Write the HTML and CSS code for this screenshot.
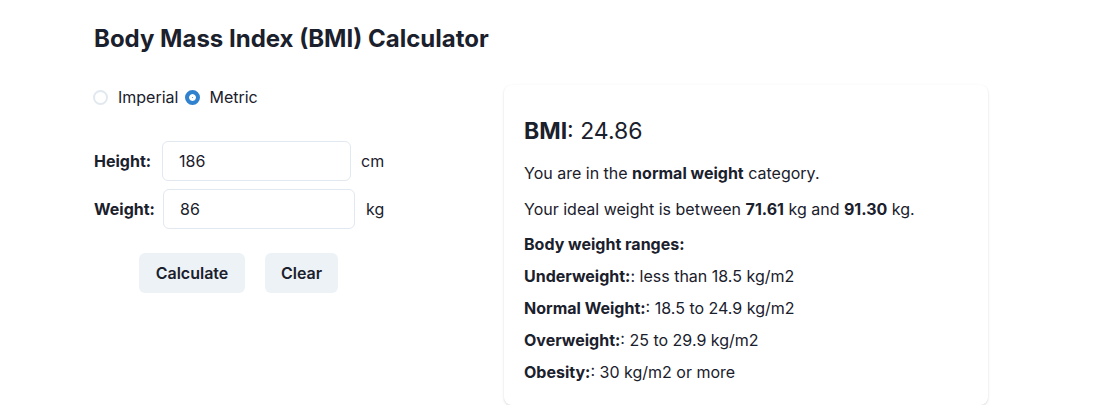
FILE: index.html
```html
<!DOCTYPE html>
<html lang="en">
<head>
<meta charset="utf-8">
<title>BMI Calculator</title>
<link rel="stylesheet" href="styles.css">
</head>
<body>
<main class="page">
  <h1 class="title">Body Mass Index (BMI) Calculator</h1>
  <div class="layout">
    <section class="form">
      <div class="units">
        <label class="radio"><span class="dot"></span><span>Imperial</span></label>
        <label class="radio checked"><span class="dot"></span><span>Metric</span></label>
      </div>
      <div class="rows">
        <div class="row">
          <span class="lbl">Height:</span>
          <div class="input input-h">186</div>
          <span class="unit">cm</span>
        </div>
        <div class="row">
          <span class="lbl">Weight:</span>
          <div class="input input-w">86</div>
          <span class="unit">kg</span>
        </div>
      </div>
      <div class="buttons">
        <button class="btn">Calculate</button>
        <button class="btn">Clear</button>
      </div>
    </section>
    <section class="card">
      <h2 class="bmi"><b>BMI</b>: 24.86</h2>
      <p class="p1">You are in the <b>normal weight</b> category.</p>
      <p class="p2">Your ideal weight is between <b>71.61</b> kg and <b>91.30</b> kg.</p>
      <p class="p3"><b>Body weight ranges:</b></p>
      <p class="li"><b>Underweight:</b>: less than 18.5 kg/m2</p>
      <p class="li"><b>Normal Weight:</b>: 18.5 to 24.9 kg/m2</p>
      <p class="li"><b>Overweight:</b>: 25 to 29.9 kg/m2</p>
      <p class="li"><b>Obesity:</b>: 30 kg/m2 or more</p>
    </section>
  </div>
</main>
</body>
</html>
```

FILE: styles.css
```css
* { box-sizing: border-box; }
html, body { margin: 0; padding: 0; background: #fff; }
body {
  font-family: Inter, "Noto Sans", sans-serif;
  color: #1a202c;
  font-size: 16px;
}
.page { padding: 24px 0 0 94px; }
.title {
  margin: 0;
  font-size: 24px;
  font-weight: 700;
  line-height: 30px;
}
.layout {
  display: grid;
  grid-template-columns: 410px 484px;
  margin-top: 31px;
}
.form { padding-top: 0; }
.units { display: flex; align-items: center; gap: 7px; height: 24px; }
.radio { display: flex; align-items: center; gap: 9px; }
.radio:first-child { gap: 10px; }
.dot {
  width: 15px; height: 15px; border-radius: 50%;
  border: 2px solid #e2e8f0; background: #fff;
}
.radio.checked .dot { background: #3182ce; border: 4px solid #3182ce; box-shadow: inset 0 0 0 3px #fff; }
.radio:first-child { margin-left: -1px; }
.rows { margin-top: 32px; display: flex; flex-direction: column; gap: 8px; }
.row { display: flex; align-items: center; }
.lbl { font-weight: 700; width: 68px; }
.row:nth-child(2) .lbl { width: 69px; }
.input {
  height: 40px; border: 1px solid #e2e8f0; border-radius: 6px;
  padding: 0 16px; display: flex; align-items: center;
}
.input-h { width: 189px; }
.input-w { width: 192px; }
.unit { margin-left: 10px; }
.row:nth-child(2) .unit { margin-left: 11px; }
.buttons { display: flex; gap: 20px; margin-top: 24px; padding-left: 45px; }
.btn {
  font: inherit; font-weight: 600; color: #1a202c;
  height: 40px; border: 0; border-radius: 6px; background: #edf2f7;
  padding: 0;
}
.btn:first-child { width: 106px; }
.btn:last-child { width: 73px; }
.card {
  margin-top: 0;
  height: 320px;
  border-radius: 8px;
  background: #fff;
  box-shadow: 0 1px 3px rgba(0,0,0,0.1), 0 1px 2px rgba(0,0,0,0.06);
  padding: 30px 20px 20px 20px;
}
.bmi { margin: 0; font-size: 23px; font-weight: 400; line-height: 32px; }
.bmi b { font-weight: 700; }
.card p { margin: 0; line-height: 22px; }
.card .p1 { margin-top: 15px; }
.card .p2 { margin-top: 14px; }
.card .p3 { margin-top: 13px; }
.card .li { margin-top: 10px; }
.card p b { font-weight: 700; }
```
